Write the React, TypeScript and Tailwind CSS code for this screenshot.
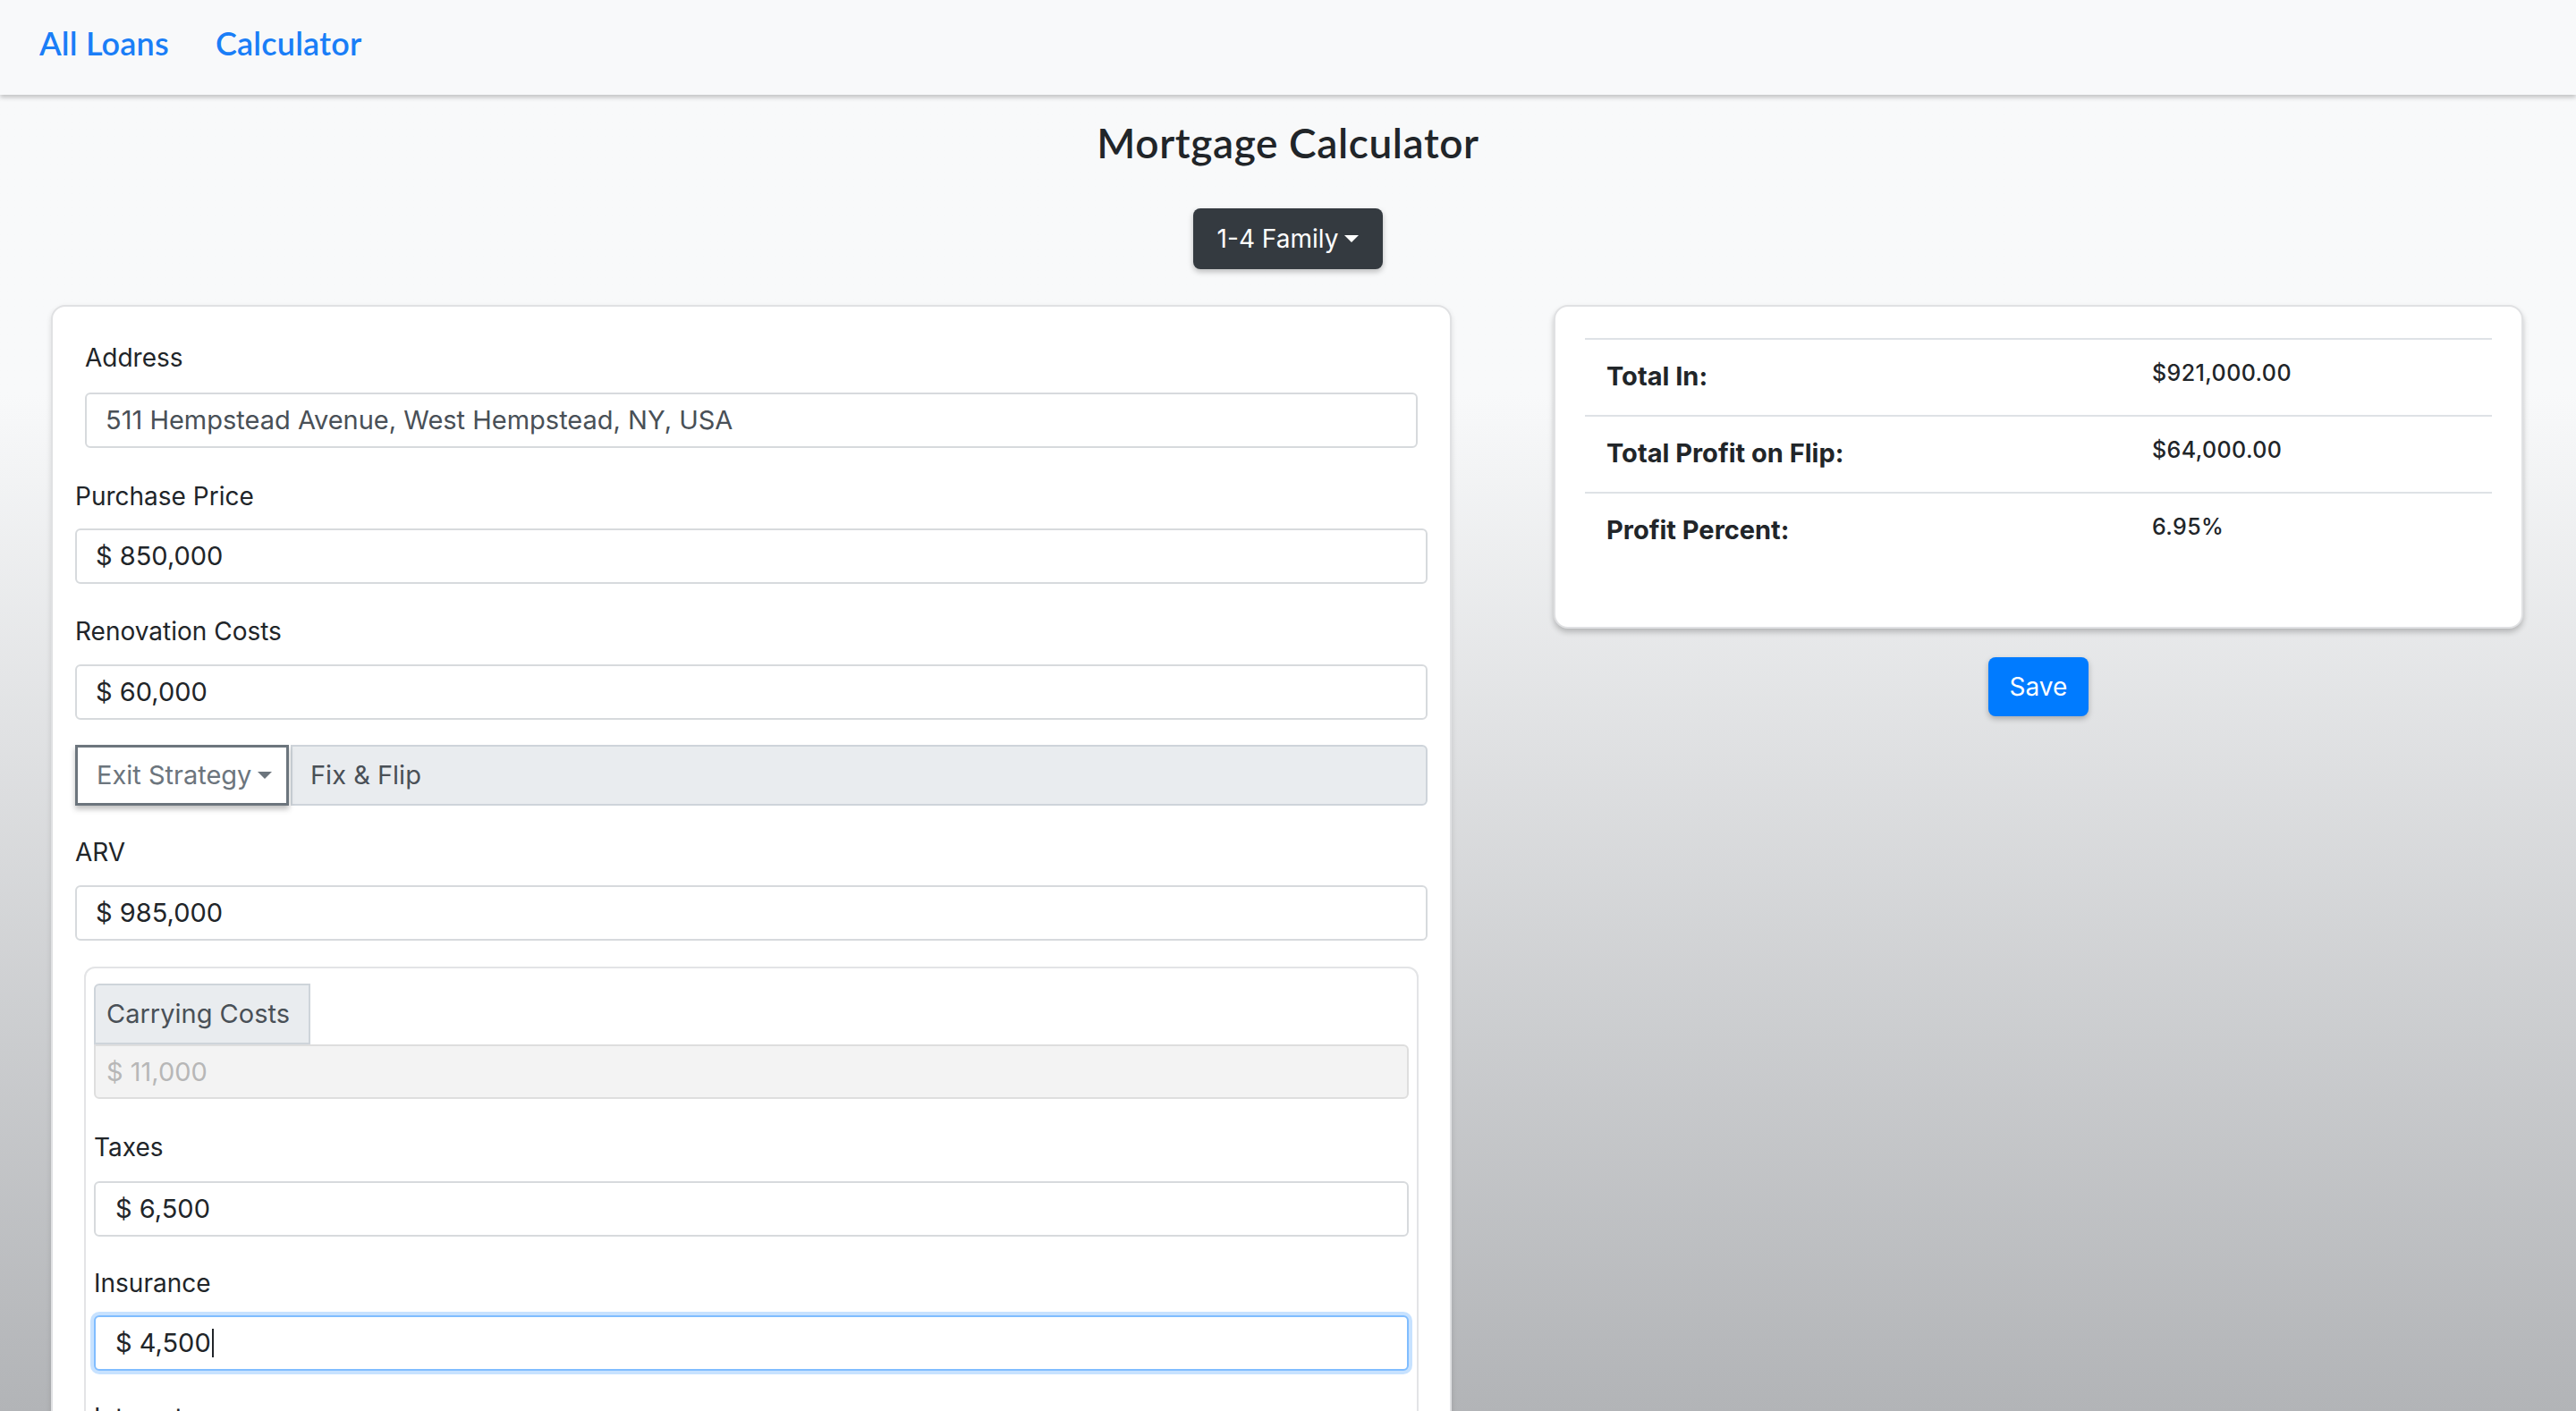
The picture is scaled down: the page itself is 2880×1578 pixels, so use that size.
import React from "react";

const sans = { fontFamily: "Inter, 'Liberation Sans', sans-serif" };
const round = { fontFamily: "Lato, 'Noto Sans', sans-serif" };

function Label({ children, className = "" }: { children: React.ReactNode; className?: string }) {
  return (
    <div className={"h-[42px] leading-[42px] text-[28px] text-[#212529] " + className}>{children}</div>
  );
}

function Field({
  children,
  className = "",
}: {
  children: React.ReactNode;
  className?: string;
}) {
  return (
    <div
      className={
        "h-[62px] border-2 border-[#d7dadd] rounded-[6px] bg-white pl-[21px] flex items-center text-[29px] text-[#212529] " +
        className
      }
    >
      {children}
    </div>
  );
}

function Caret({ color }: { color: string }) {
  return (
    <span
      className={
        "inline-block w-0 h-0 border-t-[8px] border-x-[8px] border-x-transparent ml-[7px] align-[5px] " + color
      }
    />
  );
}

export default function App() {
  return (
    <div
      className="w-[2880px] h-[1578px] overflow-hidden bg-linear-to-b from-[#f8f9fa] from-[28%] to-[#b2b4b7]"
      style={sans}
    >
      {/* Navbar */}
      <nav className="h-[106px] bg-[#f8f9fa] shadow-[0_3px_5px_rgba(0,0,0,0.22)] flex items-start pt-[26px] pl-[44px] gap-[52px] relative z-10">
        <a className="text-[36px] leading-[44px] font-semibold text-[#1a7ef7] tracking-[0.2px]" style={round}>
          All Loans
        </a>
        <a className="text-[36px] leading-[44px] font-semibold text-[#1a7ef7] tracking-[0.2px]" style={round}>
          Calculator
        </a>
      </nav>

      {/* Title */}
      <div className="flex flex-col items-center">
        <h1
          className="mt-[29px] text-[46px] leading-[50px] text-[#212529] font-semibold tracking-[0.6px]"
          style={round}
        >
          Mortgage Calculator
        </h1>
        <button className="mt-[48px] h-[68px] w-[212px] rounded-[8px] bg-[#343a40] text-white text-[28px] shadow-[0_3px_6px_rgba(0,0,0,0.25)] flex items-center justify-center">
          1-4 Family
          <Caret color="border-t-white" />
        </button>
      </div>

      {/* Columns */}
      <div className="flex mt-[40px]">
        {/* Left column */}
        <div className="w-[1680px] px-[57px]">
          <div className="bg-white border-2 border-[#e0e1e3] rounded-[16px] pt-[36px] px-[25px] pb-[40px] shadow-[0_3px_6px_rgba(0,0,0,0.12)]">
            <div className="mx-[11px]">
              <Label>Address</Label>
              <Field className="mt-[18px] border-[#d0d5da] text-[#495057]">
                511 Hempstead Avenue, West Hempstead, NY, USA
              </Field>
            </div>

            <Label className="mt-[33px]">Purchase Price</Label>
            <Field className="mt-[15px] h-[61px]">$ 850,000</Field>

            <Label className="mt-[32px]">Renovation Costs</Label>
            <Field className="mt-[16px] h-[61px]">$ 60,000</Field>

            <div className="mt-[28px] h-[68px] flex">
              <div className="w-[239px] h-[68px] border-[3px] border-[#6c757d] bg-white text-[#6c757d] text-[29px] flex items-center pl-[21px] shadow-[0_4px_6px_rgba(0,0,0,0.25)] relative z-10">
                Exit Strategy
                <Caret color="border-t-[#6c757d]" />
              </div>
              <div className="flex-1 h-[68px] border-2 border-[#ced4da] bg-[#e9ecef] rounded-r-[6px] ml-[2px] text-[#495057] text-[29px] flex items-center pl-[20px]">
                Fix &amp; Flip
              </div>
            </div>

            <Label className="mt-[31px]">ARV</Label>
            <Field className="mt-[16px] h-[61px]">$ 985,000</Field>

            {/* Inner card */}
            <div className="mt-[29px] mx-[10px] border-2 border-[#e3e4e6] rounded-[12px] pt-[17px] px-[9px] pb-[40px]">
              <div className="w-[242px] h-[68px] bg-[#e9ecef] border-2 border-[#ced4da] rounded-tl-[6px] text-[#495057] text-[29px] flex items-center pl-[12px]">
                Carrying Costs
              </div>
              <div className="h-[61px] bg-[#f3f3f3] border-2 border-[#dedede] rounded-b-[6px] rounded-tr-[6px] text-[#b7b7b7] text-[29px] flex items-center pl-[12px]">
                $ 11,000
              </div>

              <Label className="mt-[33px]">Taxes</Label>
              <Field className="mt-[17px] h-[58px] pl-[22px]">$ 6,500</Field>

              <Label className="mt-[31px]">Insurance</Label>
              <div className="mt-[15px] h-[62px] border-2 border-[#80bdff] rounded-[6px] bg-white pl-[22px] flex items-center text-[29px] text-[#212529] shadow-[0_0_0_4px_rgba(0,123,255,0.22)]">
                $ 4,500
                <span className="inline-block w-[2px] h-[32px] bg-[#212529] ml-[1px]" />
              </div>

              <Label className="mt-[31px]">Interest</Label>
              <Field className="mt-[16px] h-[61px]">$ 3,500</Field>
            </div>
          </div>
        </div>

        {/* Right column */}
        <div className="flex-1 pl-[57px] pr-[59px]">
          <div className="bg-white border-2 border-[#e0e1e3] rounded-[16px] pt-[35px] px-[33px] pb-[63px] shadow-[0_4px_6px_rgba(0,0,0,0.22)]">
            <div className="border-t-2 border-[#dee2e6]">
              {[
                ["Total In:", "$921,000.00"],
                ["Total Profit on Flip:", "$64,000.00"],
                ["Profit Percent:", "6.95%"],
              ].map(([k, v], i) => (
                <div
                  key={k}
                  className={
                    "flex h-[86px] " + (i < 2 ? "border-b-2 border-[#dee2e6]" : "")
                  }
                >
                  <div className="w-[610px] pl-[24px] pt-[20px] text-[29px] leading-[42px] font-bold text-[#212529] tracking-[0px]">
                    {k}
                  </div>
                  <div className="flex-1 pl-[24px] pt-[19px] text-[25px] leading-[36px] font-medium text-[#212529] tracking-[0.4px]">
                    {v}
                  </div>
                </div>
              ))}
            </div>
          </div>
          <div className="flex justify-center mt-[32px]">
            <button className="w-[112px] h-[66px] rounded-[8px] bg-[#007bff] text-white text-[28px] shadow-[0_3px_6px_rgba(0,0,0,0.25)]">
              Save
            </button>
          </div>
        </div>
      </div>
    </div>
  );
}
